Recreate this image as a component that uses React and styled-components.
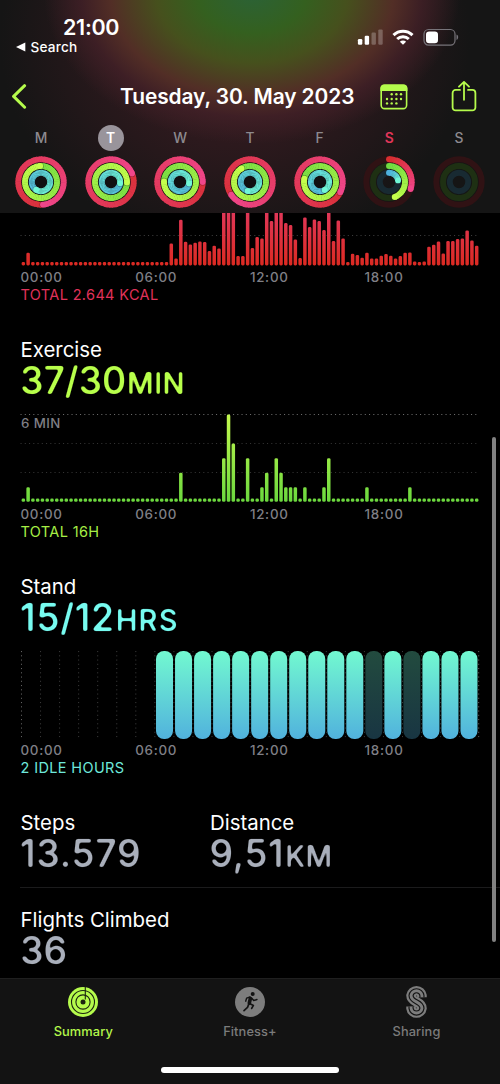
import React from 'react';
import styled, { createGlobalStyle } from 'styled-components';

const GlobalStyle = createGlobalStyle`
  * {
    box-sizing: border-box;
  }

  body {
    margin: 0;
    background: #000;
    overflow: hidden;
  }
`;

const Screen = styled.div`
  position: relative;
  width: 500px;
  height: 1084px;
  display: flex;
  flex-direction: column;
  background: #000;
  color: #fff;
  font-family: Inter, 'Liberation Sans', sans-serif;
  overflow: hidden;
  white-space: nowrap;
`;

const Header = styled.header`
  height: 213px;
  flex-shrink: 0;
  background:
    radial-gradient(
      ellipse 208px 150px at 252px -6px,
      #2b6236 0%,
      #34601f 26%,
      #46501d 46%,
      #522e26 68%,
      rgba(66, 32, 39, 0.8) 82%,
      rgba(40, 24, 28, 0) 100%
    ),
    radial-gradient(ellipse 235px 210px at 235px 40px, #3a1c22 0%, #2c191d 50%, rgba(21, 20, 20, 0) 100%),
    #151515;
`;

const StatusBar = styled.div`
  height: 76px;
  display: flex;
  justify-content: space-between;
  padding: 17px 41px 0 16px;
`;

const Clock = styled.div`
  padding-left: 47px;
  font-size: 21.5px;
  line-height: 21px;
  font-weight: 600;
  letter-spacing: -0.3px;
`;

const BackLink = styled.div`
  display: flex;
  align-items: center;
  gap: 5px;
  height: 18px;
  font-size: 13.6px;
  font-weight: 500;
  letter-spacing: 0.2px;
`;

const StatusIcons = styled.div`
  display: flex;
  align-items: flex-start;
  gap: 9px;
  padding-top: 11px;
`;

const NavBar = styled.div`
  height: 42px;
  display: flex;
  align-items: center;
  padding: 0 23px 0 11px;
`;

const NavTitle = styled.h1`
  margin: 0 26px 0 93px;
  width: 234px;
  font-size: 20.9px;
  font-weight: 600;
  line-height: 42px;
  letter-spacing: -0.08px;
`;

const NavActions = styled.div`
  display: flex;
  align-items: center;
  gap: 43px;
`;

const Week = styled.div`
  display: grid;
  grid-template-columns: repeat(7, 69.65px);
  padding: 7px 0 0 6.2px;
  justify-items: center;
`;

const Day = styled.div`
  display: flex;
  flex-direction: column;
  align-items: center;
  gap: 4.5px;
`;

const DayLetter = styled.div`
  width: 26px;
  height: 26px;
  border-radius: 50%;
  display: flex;
  align-items: center;
  justify-content: center;
  font-size: 13.8px;
  font-weight: ${props => (props.$selected || props.$today ? 600 : 500)};
  color: ${props => (props.$selected ? '#fff' : props.$today ? '#e2365a' : '#8d8a8f')};
  background: ${props => (props.$selected ? '#99949b' : 'transparent')};
`;

const Content = styled.main`
  flex: 1;
  min-height: 0;
  padding-left: 20px;
  overflow: hidden;
`;

const Metric = styled.section`
  margin-top: ${props => props.$top || 0}px;
`;

const Label = styled.div`
  height: 24px;
  padding-left: 0.5px;
  font-size: 20.4px;
  line-height: 24px;
  letter-spacing: 0;
`;

const Value = styled.div`
  height: 38px;
  font-size: 37.5px;
  line-height: 38px;
  font-weight: 500;
  letter-spacing: ${props => props.$spacing ?? 0}px;
  color: ${props => props.$color};
  filter: url(#soft-corners);
`;

const Unit = styled.span`
  margin-left: 1px;
  font-size: 29.2px;
  letter-spacing: ${props => props.$spacing || 0}px;
`;

const Plot = styled.svg`
  display: block;
`;

const ChartArea = styled.div`
  position: relative;
  margin-top: ${props => props.$top || 0}px;
`;

const PeakLabel = styled.div`
  position: absolute;
  left: 1px;
  top: 2px;
  font-size: 13.3px;
  line-height: 18px;
  font-weight: 500;
  letter-spacing: 0.4px;
  color: #7f7f85;
`;

const Axis = styled.div`
  height: 22px;
  display: grid;
  grid-template-columns: repeat(4, 114.7px);
  padding-left: 0.5px;
  font-size: 13.4px;
  line-height: 22px;
  font-weight: 500;
  letter-spacing: 0.72px;
  color: #7f7f85;
`;

const Footnote = styled.div`
  height: 14px;
  padding-left: 0.5px;
  font-size: 14.5px;
  line-height: 14px;
  letter-spacing: 0.36px;
  color: ${props => props.$color};
`;

const StatRow = styled.div`
  display: flex;
  padding-top: ${props => props.$top}px;
  height: ${props => props.$height}px;
  border-bottom: ${props => (props.$divided ? '1px solid #1b1b1c' : 'none')};
`;

const Stat = styled.div`
  width: 189.5px;
`;

const ScrollThumb = styled.div`
  position: absolute;
  left: 492px;
  top: 437px;
  width: 4px;
  height: 505px;
  border-radius: 2px;
  background: #818181;
`;

const TabBar = styled.nav`
  height: 106px;
  flex-shrink: 0;
  display: flex;
  flex-direction: column;
  align-items: center;
  border-top: 1px solid #1f1f1f;
  background: #131313;
`;

const Tabs = styled.div`
  width: 100%;
  height: 88px;
  display: grid;
  grid-template-columns: repeat(3, 166.6px);
`;

const Tab = styled.div`
  display: flex;
  flex-direction: column;
  align-items: center;
  padding-top: 6px;
  font-size: 12.8px;
  font-weight: 500;
  letter-spacing: 0.1px;
  line-height: 18px;
  color: ${props => (props.$active ? '#b3f84b' : '#7b7b7b')};

  svg {
    margin-bottom: 4px;
  }
`;

const HomeIndicator = styled.div`
  width: 178px;
  height: 6px;
  border-radius: 3px;
  background: #fff;
`;

const LIME = '#b5fb4c';

const RING_COLORS = [
  { from: [215, 46, 48], to: [240, 70, 138], track: '#301214' },
  { from: [112, 220, 66], to: [197, 255, 76], track: '#1e3013' },
  { from: [78, 178, 222], to: [112, 247, 214], track: '#182a32' },
];
const RING_RADII = [22.7, 16, 9.2];

// angle: where the ring ends, full: the ring has gone past one lap
const WEEK = [
  { letter: 'M', angles: [175, 357, 212], full: true },
  { letter: 'T', angles: [68, 92, 98], full: true, selected: true },
  { letter: 'W', angles: [90, 272, 100], full: true },
  { letter: 'T', angles: [236, 328, 195], full: true },
  { letter: 'F', angles: [117, 282, 150], full: true },
  { letter: 'S', angles: [108, 159, 80], today: true },
  { letter: 'S', angles: null },
];

const MOVE = [
  3.3, 12.7, ...Array(29).fill(3.3),
  22, 7, 45.7, 23.7, 21, 22.7, 24, 23.3, 14.3, 19.7, 17, 60, 60, 60, 9.3, 9.3, 60,
  17.3, 28.3, 27, 60, 44.3, 60, 60, 42.3, 40.3, 26, 7.3, 48, 38.3, 46, 44.3, 35.3,
  60, 24.3, 45, 27, 3.3, 11.7, 10.3, 7.7, 12.7, 7, 7, 9.7, 11.3, 9.7, 7, 9.3, 12.7, 13,
  4, 3.3, 4, 18.7, 20.7, 24, 12, 24.3, 24.3, 26.3, 27, 35, 25, 19.7,
];

// minutes per quarter of an hour
const EXERCISE_MINUTES = {
  1: 1, 33: 2, 42: 3, 43: 6, 44: 4, 47: 3, 50: 1, 51: 2, 53: 3, 54: 2,
  55: 1, 56: 1, 57: 1, 59: 1, 63: 1, 64: 3, 72: 1, 81: 1,
};
const EXERCISE = Array.from({ length: 96 }, (_, i) =>
  EXERCISE_MINUTES[i] ? EXERCISE_MINUTES[i] * 14.55 : 3.3
);

const IDLE_HOURS = [18, 20];

const point = (r, deg) => {
  const a = (deg * Math.PI) / 180;
  return [26 + r * Math.sin(a), 26 - r * Math.cos(a)];
};

const arc = (r, start, end) => {
  const [x1, y1] = point(r, start);
  const [x2, y2] = point(r, end);
  return `M${x1} ${y1}A${r} ${r} 0 0 1 ${x2} ${y2}`;
};

const mix = (from, to, t) =>
  `rgb(${from.map((c, i) => Math.round(c + (to[i] - c) * t)).join(',')})`;

const Ring = ({ radius, colors, angle, full }) => {
  const sweep = full ? 360 : angle;
  const start = full ? angle - 360 : 0;
  // a ring past one lap already has part of its gradient behind it
  const base = full ? 0.12 : 0;
  const steps = Math.ceil(sweep / 6);
  const size = sweep / steps;
  const [ex, ey] = point(radius, angle);
  const [sx, sy] = point(radius, start);
  const [shx, shy] = point(radius, angle + 40 / radius);

  return (
    <g fill="none" strokeWidth="5.9">
      {!full && <circle cx={sx} cy={sy} r="2.95" fill={mix(colors.from, colors.to, 0)} />}
      {Array.from({ length: steps }, (_, i) => (
        <path
          key={i}
          d={arc(radius, start + i * size, start + (i + 1) * size + (i < steps - 1 ? 1.5 : 0))}
          stroke={mix(colors.from, colors.to, base + (1 - base) * (i / steps))}
        />
      ))}
      {full && <circle cx={shx} cy={shy} r="2.9" fill="#000" opacity="0.28" />}
      <circle cx={ex} cy={ey} r="2.95" fill={mix(colors.from, colors.to, 1)} />
    </g>
  );
};

const ActivityRings = ({ angles, full }) => (
  <svg width="52" height="52" viewBox="0 0 52 52">
    {full && <circle cx="26" cy="26" r="24" fill="#111012" />}
    {RING_COLORS.map((colors, i) => (
      <React.Fragment key={i}>
        {!full && (
          <circle cx="26" cy="26" r={RING_RADII[i]} fill="none" stroke={colors.track} strokeWidth="5.9" />
        )}
        {angles && <Ring radius={RING_RADII[i]} colors={colors} angle={angles[i]} full={full} />}
      </React.Fragment>
    ))}
  </svg>
);

const GridLine = ({ y, color }) => (
  <line x1="0.5" x2="459.5" y1={y} y2={y} stroke={color} strokeWidth="1" strokeDasharray="1.1 3.15" />
);

const BarChart = ({ id, values, height, base, from, to, lines }) => (
  <Plot width="460" height={height}>
    <defs>
      <linearGradient id={id} gradientUnits="userSpaceOnUse" x1="0" y1={base} x2="0" y2={base - 88}>
        <stop offset="0" stopColor={from} />
        <stop offset="1" stopColor={to} />
      </linearGradient>
    </defs>
    {lines.map(line => (
      <GridLine key={line.y} {...line} />
    ))}
    {values.map((value, i) => (
      <rect
        key={i}
        x={1.6 + i * 4.772}
        y={base - value}
        width="3.5"
        height={value}
        rx="1.4"
        fill={`url(#${id})`}
      />
    ))}
  </Plot>
);

const StandChart = () => (
  <Plot width="460" height="91">
    <defs>
      <linearGradient id="stand" x1="0" y1="0" x2="0" y2="1">
        <stop offset="0" stopColor="#72f9d0" />
        <stop offset="1" stopColor="#51b2dd" />
      </linearGradient>
    </defs>
    {Array.from({ length: 25 }, (_, i) => (
      <line
        key={i}
        x1={1.5 + i * 19.05}
        x2={1.5 + i * 19.05}
        y1="3"
        y2="90"
        stroke={i % 24 === 0 ? '#626262' : '#3a3a3a'}
        strokeWidth="1"
        strokeDasharray="1.1 3.15"
      />
    ))}
    {Array.from({ length: 17 }, (_, i) => i + 7).map(hour => (
      <rect
        key={hour}
        x={2.8 + hour * 19.03}
        y="3"
        width="17"
        height="88"
        rx="8"
        fill="url(#stand)"
        opacity={IDLE_HOURS.includes(hour) ? 0.3 : 1}
      />
    ))}
  </Plot>
);

const TimeAxis = () => (
  <Axis>
    <span>00:00</span>
    <span>06:00</span>
    <span>12:00</span>
    <span>18:00</span>
  </Axis>
);

const SignalIcon = () => (
  <svg width="26" height="18" viewBox="0 0 26 18" fill="#fff">
    <rect x="0.9" y="11" width="4.4" height="5.8" rx="1.2" />
    <rect x="7.7" y="7.8" width="4.4" height="9" rx="1.2" />
    <rect x="14.5" y="4.6" width="4.4" height="12.2" rx="1.2" opacity="0.25" />
    <rect x="21.3" y="1.4" width="4.4" height="15.4" rx="1.2" opacity="0.25" />
  </svg>
);

const WifiIcon = () => (
  <svg width="22" height="18" viewBox="0 0 22 18" fill="none" stroke="#fff" strokeWidth="3">
    <path d="M1.5 7.1A13.6 13.6 0 0 1 20.5 7.1" />
    <path d="M5.2 11A8.3 8.3 0 0 1 16.8 11" />
    <path d="M11 16.8L7.9 13.7A4.4 4.4 0 0 1 14.1 13.7Z" fill="#fff" stroke="none" />
  </svg>
);

const BatteryIcon = () => (
  <svg width="36" height="18" viewBox="0 0 36 18">
    <rect x="1" y="1.5" width="31" height="15.6" rx="4.6" fill="none" stroke="#77747a" strokeWidth="1.2" />
    <rect x="3" y="3.4" width="12" height="11.8" rx="3.2" fill="#fff" />
    <path d="M33.5 6.6C35.7 7.4 35.7 11.2 33.5 12Z" fill="#77747a" />
  </svg>
);

const ChevronIcon = () => (
  <svg width="16" height="26" viewBox="0 0 16 26" fill="none" stroke={LIME} strokeWidth="3">
    <path d="M13.6 1.7L2.6 12.4L13.6 23.2" strokeLinecap="round" strokeLinejoin="round" />
  </svg>
);

const CalendarIcon = () => (
  <svg width="28" height="26" viewBox="0 0 28 26" fill={LIME}>
    <rect x="1.2" y="1.2" width="25.4" height="23.4" rx="3.4" fill="none" stroke={LIME} strokeWidth="1.6" />
    <path d="M0.4 7V4.2A3.8 3.8 0 0 1 4.2 0.4H23.6A3.8 3.8 0 0 1 27.4 4.2V7Z" />
    {[[11.7, 10.3], [16.4, 10.3], [21, 10.3], [7, 15], [11.7, 15], [16.4, 15], [21, 15],
      [7, 19.4], [11.7, 19.4], [16.4, 19.4]].map(([x, y]) => (
      <circle key={`${x}-${y}`} cx={x} cy={y} r="1.2" />
    ))}
  </svg>
);

const ShareIcon = () => (
  <svg
    width="26"
    height="32"
    viewBox="0 0 26 32"
    fill="none"
    stroke={LIME}
    strokeWidth="1.8"
    strokeLinecap="round"
    strokeLinejoin="round"
  >
    <path d="M9 8.9H4.6A3 3 0 0 0 1.6 11.9V26.4A3 3 0 0 0 4.6 29.4H21.4A3 3 0 0 0 24.4 26.4V11.9A3 3 0 0 0 21.4 8.9H17" />
    <path d="M13 18.8V0.9M8 5.7L13 0.9L18 5.7" />
  </svg>
);

const SummaryIcon = () => (
  <svg width="34" height="34" viewBox="-17 -17 34 34">
    <circle r="15" fill={LIME} />
    <g fill="none" stroke="#1b2410" strokeWidth="1.1">
      <circle r="11.5" />
      <circle r="7.1" />
      <path d="M2.3 -15V-2.4" />
    </g>
    <circle r="2.5" fill="#1b2410" />
  </svg>
);

const FitnessIcon = () => (
  <svg width="34" height="34" viewBox="-17 -17 34 34">
    <circle r="15" fill="#7d7d7d" />
    <circle cx="2.7" cy="-8" r="2" fill="#131313" />
    <g fill="none" stroke="#131313" strokeWidth="1.4" strokeLinecap="round" strokeLinejoin="round">
      <path d="M0.4 -3.6L-0.7 1.2" strokeWidth="3.6" />
      <path d="M0 -5L-3.4 -3.9L-4.3 -0.8" />
      <path d="M1.8 -3.8L3.7 -1.5L7 -2.5" />
      <path d="M-0.4 1.4L3.4 3.4L1.7 6.4" strokeWidth="1.7" />
      <path d="M-1.3 2.4L-2.5 5.4L-6 8.6" strokeWidth="1.7" />
    </g>
  </svg>
);

const S_CURVE = 'M15.7 12.2V10.5A5.5 5.5 0 0 0 4.8 10.5C4.8 17.8 15.7 16 15.7 23.3A5.5 5.5 0 0 1 4.8 23.3V21.6';

const SharingIcon = () => (
  <svg width="21" height="34" viewBox="0 0 20.5 34" fill="none">
    <path d={S_CURVE} stroke="#7d7d7d" strokeWidth="9.6" />
    <path d={S_CURVE} stroke="#131313" strokeWidth="5.2" />
    <path d={S_CURVE} stroke="#7d7d7d" strokeWidth="2.9" />
  </svg>
);

const TABS = [
  { name: 'Summary', Icon: SummaryIcon, active: true },
  { name: 'Fitness+', Icon: FitnessIcon },
  { name: 'Sharing', Icon: SharingIcon },
];

const FilterDefs = styled.svg`
  position: absolute;
  width: 0;
  height: 0;
`;

// rounds the corners of the large figures
const SoftCorners = () => (
  <FilterDefs>
    <filter id="soft-corners" colorInterpolationFilters="sRGB">
      <feGaussianBlur stdDeviation="0.85" />
      <feComponentTransfer>
        <feFuncA type="linear" slope="2.8" intercept="-0.85" />
      </feComponentTransfer>
    </filter>
  </FilterDefs>
);

const App = () => (
  <Screen>
    <GlobalStyle />
    <SoftCorners />

    <Header>
      <StatusBar>
        <div>
          <Clock>21:00</Clock>
          <BackLink>
            <svg width="9.5" height="10" viewBox="0 0 9.5 10">
              <path d="M0 5L9.3 0.4V9.6Z" fill="#fff" />
            </svg>
            Search
          </BackLink>
        </div>
        <StatusIcons>
          <SignalIcon />
          <WifiIcon />
          <BatteryIcon />
        </StatusIcons>
      </StatusBar>

      <NavBar>
        <ChevronIcon />
        <NavTitle>Tuesday, 30. May 2023</NavTitle>
        <NavActions>
          <CalendarIcon />
          <ShareIcon />
        </NavActions>
      </NavBar>

      <Week>
        {WEEK.map((day, i) => (
          <Day key={i}>
            <DayLetter $selected={day.selected} $today={day.today}>
              {day.letter}
            </DayLetter>
            <ActivityRings angles={day.angles} full={day.full} />
          </Day>
        ))}
      </Week>
    </Header>

    <Content>
      <Metric>
        <BarChart
          id="move"
          values={MOVE}
          height={53}
          base={52.4}
          from="#dc2a22"
          to="#e4407c"
          lines={[{ y: 22.5, color: '#3c3c3c' }]}
        />
        <TimeAxis />
        <Footnote $color="#e0325a">TOTAL 2.644 KCAL</Footnote>
      </Metric>

      <Metric $top={36}>
        <Label>Exercise</Label>
        <Value $color="#b8ff4b" $spacing={-0.1}>
          37/30<Unit $spacing={0.5}>MIN</Unit>
        </Value>
        <ChartArea $top={12}>
          <BarChart
            id="exercise"
            values={EXERCISE}
            height={91}
            base={89.8}
            from="#6bd83e"
            to="#c4f94e"
            lines={[
              { y: 2.5, color: '#6a6a6a' },
              { y: 31.5, color: '#333' },
              { y: 60.5, color: '#333' },
            ]}
          />
          <PeakLabel>6 MIN</PeakLabel>
        </ChartArea>
        <TimeAxis />
        <Footnote $color="#a6ee45">TOTAL 16H</Footnote>
      </Metric>

      <Metric $top={35.5}>
        <Label>Stand</Label>
        <Value $color="#77fbf0" $spacing={0.7}>
          15/12<Unit $spacing={1.1}>HRS</Unit>
        </Value>
        <ChartArea $top={11.5}>
          <StandChart />
        </ChartArea>
        <TimeAxis />
        <Footnote $color="#6ee8dc">2 IDLE HOURS</Footnote>
      </Metric>

      <StatRow $top={36} $height={113} $divided>
        <Stat>
          <Label>Steps</Label>
          <Value $color="#a9afbb" $spacing={0.7}>13.579</Value>
        </Stat>
        <Stat>
          <Label>Distance</Label>
          <Value $color="#a9afbb" $spacing={0.6}>
            9,51<Unit $spacing={0.3}>KM</Unit>
          </Value>
        </Stat>
      </StatRow>
      <StatRow $top={20} $height={90}>
        <Stat>
          <Label>Flights Climbed</Label>
          <Value $color="#a9afbb">36</Value>
        </Stat>
      </StatRow>
    </Content>

    <ScrollThumb />

    <TabBar>
      <Tabs>
        {TABS.map(({ name, Icon, active }) => (
          <Tab key={name} $active={active}>
            <Icon />
            {name}
          </Tab>
        ))}
      </Tabs>
      <HomeIndicator />
    </TabBar>
  </Screen>
);

export default App;
